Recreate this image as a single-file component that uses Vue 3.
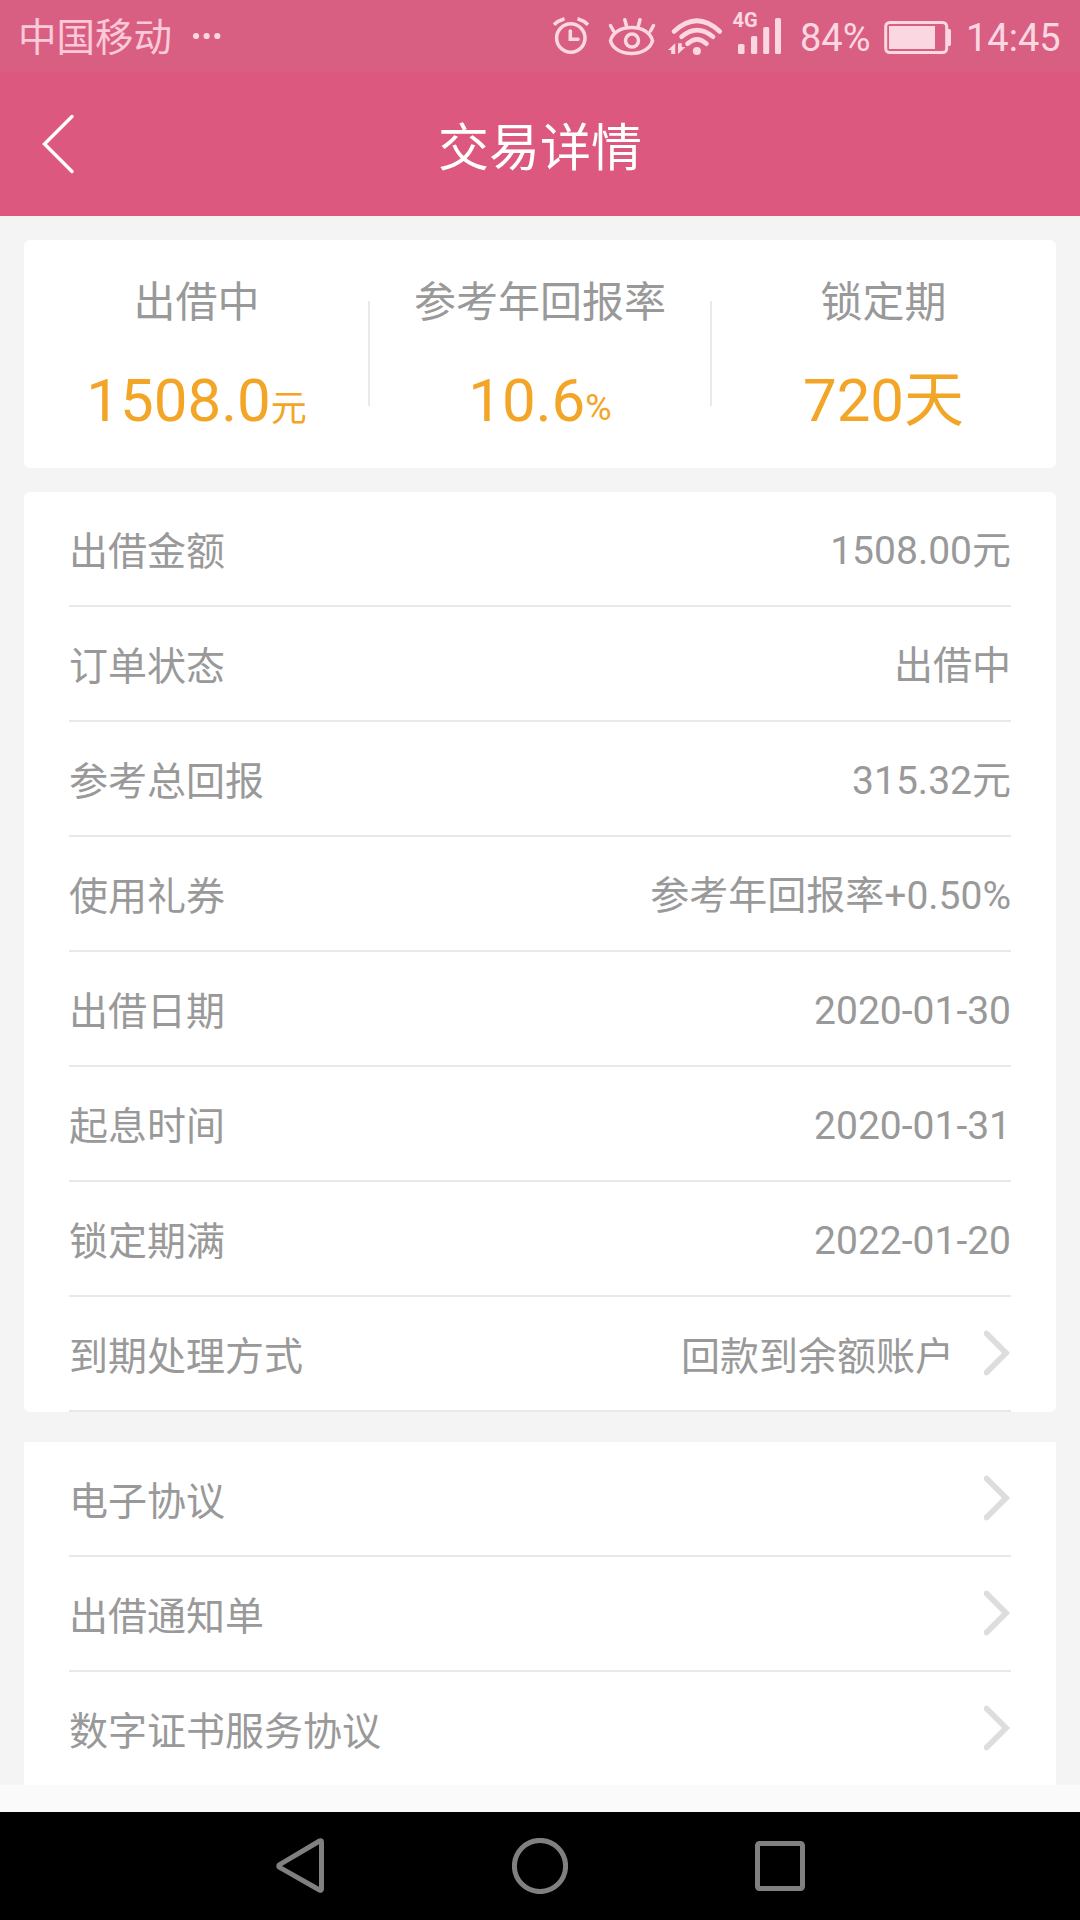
<script setup>
const stats = [
  { label: '出借中', value: '1508.0', unit: '元' },
  { label: '参考年回报率', value: '10.6', unit: '%' },
  { label: '锁定期', value: '720天', unit: '' },
]

const details = [
  { label: '出借金额', value: '1508.00元' },
  { label: '订单状态', value: '出借中' },
  { label: '参考总回报', value: '315.32元' },
  { label: '使用礼券', value: '参考年回报率+0.50%' },
  { label: '出借日期', value: '2020-01-30' },
  { label: '起息时间', value: '2020-01-31' },
  { label: '锁定期满', value: '2022-01-20' },
  { label: '到期处理方式', value: '回款到余额账户', link: true },
]

const documents = ['电子协议', '出借通知单', '数字证书服务协议']
</script>

<template>
  <div class="screen">
    <div class="status">
      <span class="carrier">中国移动</span>
      <svg class="dots" width="28" height="72" viewBox="193 0 28 72">
        <circle cx="196" cy="36" r="3.1" /><circle cx="206.600" cy="36" r="3.1" /><circle cx="217.3" cy="36" r="3.1" />
      </svg>
      <div class="indicators">
        <!-- alarm -->
        <svg class="line" width="60" height="72" viewBox="550 0 60 72">
          <circle cx="570.8" cy="38" r="14.2" />
          <path d="M570.3 31V39.2H578" stroke-width="3.6" />
          <path d="M554 24.8Q558.5 20.5 564.5 18.8M577.5 18.8Q583.5 20.5 588 24.8" stroke-linecap="butt" />
        </svg>
        <!-- eye comfort -->
        <svg class="line" width="56" height="72" viewBox="610 0 56 72" overflow="visible">
          <path d="M610.5 40.8C612.500 32.500 621 27.600 631.500 27.600S650.500 32.500 652.500 40.800C650.500 48.500 642 53.400 631.500 53.400S612.500 48.500 610.500 40.800Z" />
          <circle cx="632" cy="40.600" r="6.500" />
          <path d="M610.500 25.500L613.500 31M624.800 19.800L626.600 26.500M640 19.800L638.200 26.500M653.500 25.500L650.500 31" />
        </svg>
        <!-- wifi -->
        <svg class="line wifi" width="64" height="72" viewBox="666 0 64 72">
          <path d="M674 31.500Q697 10 719.800 31.500M681.500 36.800Q697 23.500 713 36.800M687.500 43.800Q697 35 706.500 43.800" />
          <circle class="solid" cx="696.900" cy="51" r="4" />
          <path class="solid" d="M668 50L675.200 43.200V54H671.200V50ZM678 43.200H681.800V47H685.500L678 54Z" />
        </svg>
        <!-- mobile signal -->
        <svg class="bars" width="70" height="72" viewBox="730 0 70 72">
          <text x="732.500" y="26.700">4G</text>
          <rect x="738" y="44" width="6.500" height="10" rx="1.600" />
          <rect x="751" y="36" width="6.200" height="18" rx="1.600" />
          <rect x="763.200" y="27" width="6" height="27" rx="1.600" />
          <rect x="775" y="18" width="6" height="36" rx="1.600" />
        </svg>
        <span class="level">84%</span>
        <svg class="battery" width="82" height="72" viewBox="884 0 82 72">
          <rect class="shell" x="885.700" y="22.500" width="61" height="30" rx="4" />
          <rect x="889" y="26" width="46" height="23" />
          <path d="M948 29H949.500Q951 29 951 31V44Q951 46 949.500 46H948Z" />
        </svg>
        <span class="clock">14:45</span>
      </div>
    </div>

    <header class="bar">
      <svg class="back" width="34" height="64" viewBox="0 0 34 64">
        <path d="M30 4.500L2.500 32L30 59.500" />
      </svg>
      <h1>交易详情</h1>
    </header>

    <main class="content">
      <section class="card summary">
        <div v-for="s in stats" :key="s.label" class="stat">
          <div class="stat-label">{{ s.label }}</div>
          <div class="stat-value">{{ s.value }}<small v-if="s.unit" :class="{ percent: s.unit === '%' }">{{ s.unit }}</small></div>
        </div>
      </section>

      <section class="card list">
        <div v-for="d in details" :key="d.label" class="row">
          <span class="label">{{ d.label }}</span>
          <span class="value" :class="{ linked: d.link }">{{ d.value }}</span>
          <svg v-if="d.link" class="chevron" width="27" height="46" viewBox="0 0 27 46">
            <path d="M2.500 3.500L22 23L2.500 42.500" />
          </svg>
        </div>
      </section>

      <section class="list documents">
        <div v-for="name in documents" :key="name" class="row">
          <span class="label">{{ name }}</span>
          <svg class="chevron" width="27" height="46" viewBox="0 0 27 46">
            <path d="M2.500 3.500L22 23L2.500 42.500" />
          </svg>
        </div>
      </section>
    </main>

    <div class="footer-gap"></div>

    <nav class="nav">
      <svg width="50" height="56" viewBox="0 0 50 56">
        <path d="M46.500 4V51Q46.500 53 44.500 52L4.500 29.300Q3 28 4.500 26.700L44.500 3Q46.500 2 46.500 4Z" />
      </svg>
      <svg width="56" height="56" viewBox="0 0 56 56"><circle cx="28" cy="28" r="25.600" /></svg>
      <svg width="50" height="50" viewBox="0 0 50 50"><rect x="2.500" y="2.500" width="45" height="45" rx="2" /></svg>
    </nav>
  </div>
</template>

<style>
body {
  margin: 0;
}
</style>

<style scoped>
.screen {
  width: 1080px;
  height: 1920px;
  display: flex;
  flex-direction: column;
  overflow: hidden;
  background: #f4f4f4;
  color: #999;
  font-family: Roboto, "Noto Sans CJK SC", sans-serif;
}
svg {
  display: block;
  flex: none;
}
.status {
  display: flex;
  height: 72px;
  flex: none;
  background: #d95f82;
  color: #fbd7e2;
  font-size: 38px;
  line-height: 76px;
  white-space: nowrap;
}
.carrier {
  width: 175px;
  margin-left: 18px;
  color: #fbc9d9;
  font-size: 38.5px;
}
.dots {
  fill: #fbd7e2;
}
.indicators {
  display: flex;
  margin-left: 329px;
}
.line {
  fill: none;
  stroke: #fbd7e2;
  stroke-width: 3.5;
  stroke-linecap: round;
}
.wifi {
  stroke-width: 4.6;
}
.wifi .solid {
  fill: #fbd7e2;
  stroke: none;
}
.bars,
.battery {
  fill: #fbd7e2;
}
.bars text {
  font-size: 20px;
  font-weight: 700;
}
.battery .shell {
  fill: none;
  stroke: #fbd7e2;
  stroke-width: 3;
}
.level {
  width: 84px;
}
.bar {
  display: grid;
  grid-template-columns: 200px 1fr 200px;
  align-items: center;
  height: 144px;
  flex: none;
  background: #dc587e;
}
.back {
  margin-left: 42px;
  fill: none;
  stroke: #fff;
  stroke-width: 3.4;
  stroke-linecap: round;
}
h1 {
  margin: 9px 0 0;
  color: #fff;
  font-size: 51px;
  font-weight: 400;
  line-height: 60px;
  text-align: center;
}
.content {
  height: 1569px;
  flex: none;
  padding: 24px 24px 0;
  box-sizing: border-box;
  overflow: hidden;
}
.card {
  border-radius: 6px;
  background: #fff;
}
.summary {
  display: grid;
  grid-template-columns: 345px 342px 345px;
  height: 228px;
  margin-bottom: 24px;
  background: linear-gradient(#e9e9e9, #e9e9e9) 344px 61px / 2px 105px no-repeat,
    linear-gradient(#e9e9e9, #e9e9e9) 686px 61px / 2px 105px no-repeat, #fff;
  text-align: center;
}
.stat-label {
  padding-top: 33px;
  font-size: 42px;
  line-height: 60px;
}
.stat-value {
  margin-top: 28px;
  color: #f2a526;
  font-size: 60px;
  line-height: 80px;
  height: 80px;
}
.stat-value small {
  font-size: 36px;
  line-height: 1;
}
.stat-value .percent {
  position: relative;
  top: -1px;
}
.list {
  padding: 0 45px;
  background: #fff;
}
.row {
  display: flex;
  align-items: center;
  height: 115px;
  box-sizing: border-box;
  border-bottom: 2px solid #e9e9e9;
  font-size: 39px;
  line-height: 60px;
}
.label {
  padding-top: 6px;
}
.value {
  margin-left: auto;
  padding-top: 4px;
}
.value.linked {
  padding-top: 6px;
}
.chevron {
  margin-left: auto;
  margin-bottom: 1px;
  fill: none;
  stroke: #ddd;
  stroke-width: 5.8;
  stroke-linecap: round;
}
.value + .chevron {
  margin-left: 30px;
}
.documents {
  margin-top: 30px;
}
.footer-gap {
  height: 27px;
  flex: none;
  background: #fafafa;
}
.nav {
  display: flex;
  flex: 1;
  align-items: center;
  justify-content: center;
  gap: 187px;
  background: #000;
  fill: none;
  stroke: #808080;
  stroke-width: 5;
}
</style>
